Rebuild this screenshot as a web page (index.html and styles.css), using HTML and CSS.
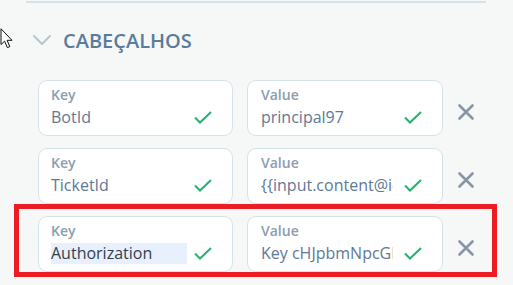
FILE: index.html
```html
<!DOCTYPE html>
<html lang="pt">
<head>
<meta charset="utf-8">
<title>Cabeçalhos</title>
<link rel="stylesheet" href="styles.css">
</head>
<body>
<div class="panel">
  <div class="divider"></div>
  <div class="section-header">
    <svg class="chevron" width="18" height="10" viewBox="0 0 18 10"><path d="M1 1 L9 9 L17 1" fill="none" stroke="#b3c8cc" stroke-width="2" stroke-linecap="round" stroke-linejoin="round"/></svg>
    <span class="section-title">CABEÇALHOS</span>
  </div>
  <div class="rows">
    <div class="row">
      <div class="field field-key">
        <div class="label">Key</div>
        <div class="line"><input class="input" value="BotId" readonly><svg class="check" width="18" height="13" viewBox="0 0 18 13"><path d="M1 6.5 L6 11.5 L17 1" fill="none" stroke="#22b36c" stroke-width="2"/></svg></div>
      </div>
      <div class="field field-value">
        <div class="label">Value</div>
        <div class="line"><input class="input" value="principal97" readonly><svg class="check" width="18" height="13" viewBox="0 0 18 13"><path d="M1 6.5 L6 11.5 L17 1" fill="none" stroke="#22b36c" stroke-width="2"/></svg></div>
      </div>
      <svg class="remove" width="16" height="16" viewBox="0 0 16 16"><path d="M1.5 1.5 L14.5 14.5 M14.5 1.5 L1.5 14.5" stroke="#8796a6" stroke-width="2.6" stroke-linecap="round"/></svg>
    </div>
    <div class="row">
      <div class="field field-key">
        <div class="label">Key</div>
        <div class="line"><input class="input" value="TicketId" readonly><svg class="check" width="18" height="13" viewBox="0 0 18 13"><path d="M1 6.5 L6 11.5 L17 1" fill="none" stroke="#22b36c" stroke-width="2"/></svg></div>
      </div>
      <div class="field field-value">
        <div class="label">Value</div>
        <div class="line"><input class="input" value="{{input.content@identity}}" readonly><svg class="check" width="18" height="13" viewBox="0 0 18 13"><path d="M1 6.5 L6 11.5 L17 1" fill="none" stroke="#22b36c" stroke-width="2"/></svg></div>
      </div>
      <svg class="remove" width="16" height="16" viewBox="0 0 16 16"><path d="M1.5 1.5 L14.5 14.5 M14.5 1.5 L1.5 14.5" stroke="#8796a6" stroke-width="2.6" stroke-linecap="round"/></svg>
    </div>
    <div class="row">
      <div class="field field-key">
        <div class="label">Key</div>
        <div class="line"><input class="input input-autofill" value="Authorization" readonly><svg class="check" width="18" height="13" viewBox="0 0 18 13"><path d="M1 6.5 L6 11.5 L17 1" fill="none" stroke="#22b36c" stroke-width="2"/></svg></div>
      </div>
      <div class="field field-value">
        <div class="label">Value</div>
        <div class="line"><input class="input" value="Key cHJpbmNpcGFsOTc=" readonly><svg class="check" width="18" height="13" viewBox="0 0 18 13"><path d="M1 6.5 L6 11.5 L17 1" fill="none" stroke="#22b36c" stroke-width="2"/></svg></div>
      </div>
      <svg class="remove" width="16" height="16" viewBox="0 0 16 16"><path d="M1.5 1.5 L14.5 14.5 M14.5 1.5 L1.5 14.5" stroke="#8796a6" stroke-width="2.6" stroke-linecap="round"/></svg>
    </div>
  </div>
  <div class="annotation"></div>
  <svg class="cursor" width="14" height="21" viewBox="0 0 14 21"><path d="M1 0.8 L1 16.5 L4.6 13.2 L7.4 19.6 L9.8 18.6 L7.1 12.3 L12 12.3 Z" fill="#fff" stroke="#111" stroke-width="1" stroke-linejoin="round"/></svg>
</div>
</body>
</html>
```

FILE: styles.css
```css
html, body {
  margin: 0;
  padding: 0;
  background: #f6f8f8;
}
body {
  font-family: "Open Sans", "Liberation Sans", sans-serif;
  width: 513px;
  height: 285px;
  overflow: hidden;
}
.panel {
  position: relative;
  height: 285px;
}
.divider {
  margin: 1px 27px 0 26px;
  height: 2px;
  background: #d3e4e9;
}
.section-header {
  display: flex;
  align-items: center;
  padding: 24px 0 0 33px;
  height: 28px;
}
.chevron {
  display: block;
  margin-right: 12px;
  margin-top: -3px;
}
.section-title {
  font-size: 20px;
  font-weight: 600;
  line-height: 28px;
  color: #5a7c9c;
}
.rows {
  display: flex;
  flex-direction: column;
  gap: 12px;
  margin-top: 25px;
  padding-left: 38px;
}
.row {
  display: flex;
  align-items: center;
}
.field {
  box-sizing: border-box;
  height: 56px;
  background: #fff;
  border: 1px solid #d3e3e7;
  border-radius: 9px;
  padding: 6px 20px 0 12px;
}
.field-key {
  width: 195px;
}
.field-value {
  width: 196px;
  margin-left: 14px;
  padding-left: 13px;
}
.field-value .input {
  width: 132px;
}
.label {
  font-size: 14px;
  line-height: 16px;
  font-weight: 600;
  color: #8c9db1;
  margin-bottom: 4px;
}
.line {
  display: flex;
  align-items: center;
  height: 21px;
}
.input {
  box-sizing: border-box;
  width: 136px;
  height: 21px;
  margin: 0;
  padding: 0;
  border: 0;
  outline: 0;
  background: transparent;
  font-family: inherit;
  font-size: 16px;
  line-height: 21px;
  color: #5f7896;
}
.input-autofill {
  background: #e8f0fe;
  color: #323e4c;
}
.check {
  display: block;
  margin-left: auto;
}
.remove {
  display: block;
  margin: 7px 0 0 15px;
}
.annotation {
  position: absolute;
  left: 14px;
  top: 203px;
  width: 483px;
  height: 73px;
  box-sizing: border-box;
  border: 5px solid #eb1c24;
}
.cursor {
  position: absolute;
  left: 0;
  top: 27px;
}
```
